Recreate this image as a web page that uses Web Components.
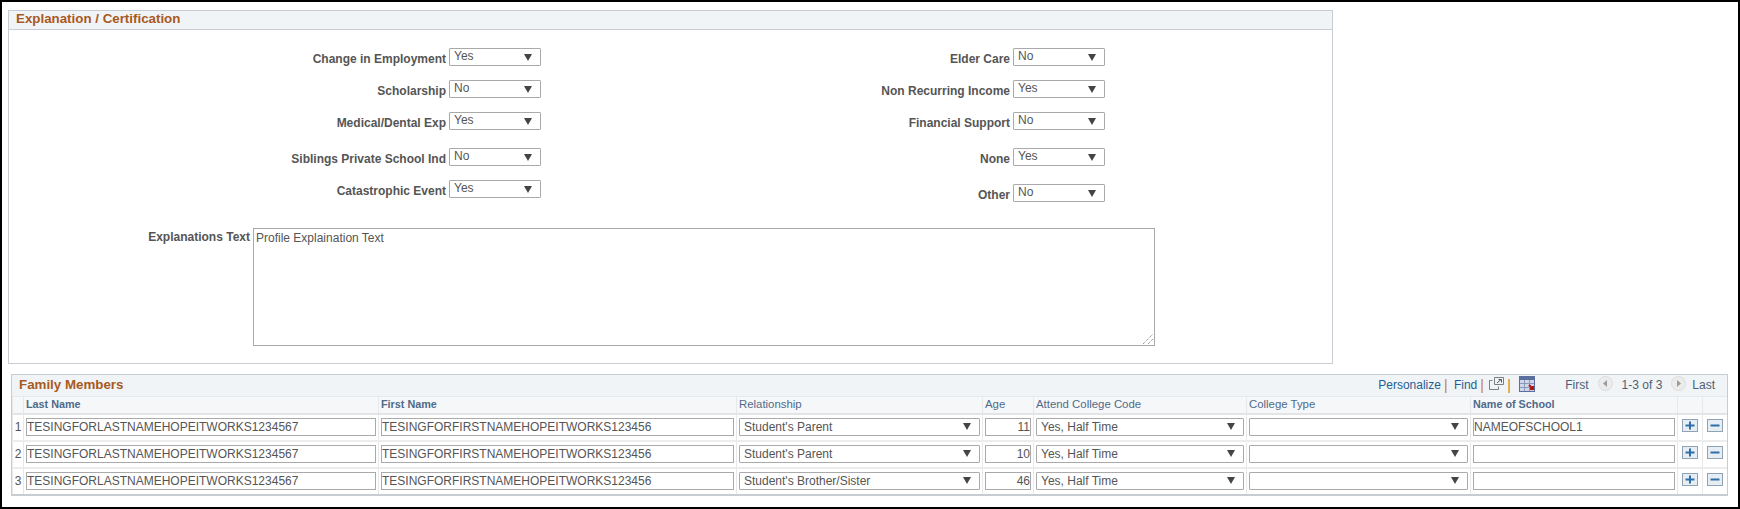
<!DOCTYPE html>
<html>
<head>
<meta charset="utf-8">
<style>
  html, body { margin: 0; background: #fff; }
  body { font: 12px "Liberation Sans", Arial, sans-serif; color: #555; }
  #page { box-sizing: border-box; width: 1740px; height: 509px; border: 2px solid #000; padding: 8px 10px 0 6px; }
</style>
</head>
<body>
<div id="page">
  <ps-section title="Explanation / Certification">
    <div slot="left">
      <ps-field label="Change in Employment" value="Yes" gap="14"></ps-field>
      <ps-field label="Scholarship" value="No" gap="14"></ps-field>
      <ps-field label="Medical/Dental Exp" value="Yes" gap="18"></ps-field>
      <ps-field label="Siblings Private School Ind" value="No" gap="14"></ps-field>
      <ps-field label="Catastrophic Event" value="Yes"></ps-field>
    </div>
    <div slot="right">
      <ps-field label="Elder Care" value="No" gap="14"></ps-field>
      <ps-field label="Non Recurring Income" value="Yes" gap="14"></ps-field>
      <ps-field label="Financial Support" value="No" gap="18"></ps-field>
      <ps-field label="None" value="Yes" gap="18"></ps-field>
      <ps-field label="Other" value="No"></ps-field>
    </div>
    <ps-textarea slot="text" label="Explanations Text">Profile Explaination Text</ps-textarea>
  </ps-section>
  <family-grid title="Family Members">
    <script type="application/json">
      [
        {"last":"TESINGFORLASTNAMEHOPEITWORKS1234567","first":"TESINGFORFIRSTNAMEHOPEITWORKS123456","rel":"Student's Parent","age":"11","code":"Yes, Half Time","type":"","school":"NAMEOFSCHOOL1"},
        {"last":"TESINGFORLASTNAMEHOPEITWORKS1234567","first":"TESINGFORFIRSTNAMEHOPEITWORKS123456","rel":"Student's Parent","age":"10","code":"Yes, Half Time","type":"","school":""},
        {"last":"TESINGFORLASTNAMEHOPEITWORKS1234567","first":"TESINGFORFIRSTNAMEHOPEITWORKS123456","rel":"Student's Brother/Sister","age":"46","code":"Yes, Half Time","type":"","school":""}
      ]
    </script>
  </family-grid>
</div>

<script>
class PsSelect extends HTMLElement {
  connectedCallback() {
    const value = this.getAttribute("value") || "";
    this.attachShadow({ mode: "open" }).innerHTML = `
      <style>
        :host {
          display: flex; box-sizing: border-box; height: 18px; align-items: center;
          justify-content: space-between; background: #fff; border: 1px solid #aaa;
          border-radius: 1px; padding: 0 8px 0 4px; color: #555;
          font: 12px/14px "Liberation Sans", Arial, sans-serif;
        }
        span { position: relative; top: var(--text-shift, 0); white-space: nowrap; }
        svg { flex: none; }
      </style>
      <span>${value}</span>
      <svg width="8" height="7" viewBox="0 0 8 7"><path d="M0 0h8L4 7z" fill="#444"/></svg>`;
  }
}
customElements.define("ps-select", PsSelect);

class PsField extends HTMLElement {
  connectedCallback() {
    const gap = this.getAttribute("gap") || 0;
    this.attachShadow({ mode: "open" }).innerHTML = `
      <style>
        :host { display: flex; justify-content: flex-end; align-items: flex-start; gap: 3px; margin-bottom: ${gap}px; }
        label { font: bold 12px/18px "Liberation Sans", Arial, sans-serif; color: #555; padding-top: 2px; height: 16px; white-space: nowrap; }
        ps-select { width: 92px; --text-shift: -1px; }
      </style>
      <label>${this.getAttribute("label")}</label>
      <ps-select value="${this.getAttribute("value")}"></ps-select>`;
  }
}
customElements.define("ps-field", PsField);

class PsTextarea extends HTMLElement {
  connectedCallback() {
    this.attachShadow({ mode: "open" }).innerHTML = `
      <style>
        :host { display: flex; gap: 3px; align-items: flex-start; }
        label { width: 241px; box-sizing: border-box; text-align: right; font: bold 12px/14px "Liberation Sans", Arial, sans-serif; color: #555; padding-top: 2px; white-space: nowrap; }
        .box { position: relative; box-sizing: border-box; width: 902px; height: 118px; border: 1px solid #aaa; padding: 2px; font: 12px/14px "Liberation Sans", Arial, sans-serif; color: #555; }
        svg { position: absolute; right: 1px; bottom: 1px; }
      </style>
      <label>${this.getAttribute("label")}</label>
      <div class="box"><slot></slot>
        <svg width="10" height="10" viewBox="0 0 10 10"><path d="M0 10 10 0M5 10l5-5" stroke="#777" stroke-dasharray="1 1" fill="none"/></svg>
      </div>`;
  }
}
customElements.define("ps-textarea", PsTextarea);

class PsSection extends HTMLElement {
  connectedCallback() {
    this.attachShadow({ mode: "open" }).innerHTML = `
      <style>
        :host { display: block; box-sizing: border-box; width: 1325px; height: 354px; border: 1px solid #c8ccd3; }
        h2 { margin: 0; box-sizing: border-box; height: 19px; padding: 0 7px; background: #f1f4f6; border-bottom: 1px solid #c8ccd3; font: bold 13.33px/16px "Liberation Sans", Arial, sans-serif; color: #a85a1e; }
        .cols { display: flex; padding-top: 18px; }
        .left { width: 532px; }
        .right { width: 564px; }
        .text { padding-top: 26px; }
      </style>
      <h2>${this.getAttribute("title")}</h2>
      <div class="cols">
        <div class="left"><slot name="left"></slot></div>
        <div class="right"><slot name="right"></slot></div>
      </div>
      <div class="text"><slot name="text"></slot></div>`;
  }
}
customElements.define("ps-section", PsSection);

class FamilyGrid extends HTMLElement {
  get data() {
    const script = this.querySelector('script[type="application/json"]');
    return script ? JSON.parse(script.textContent) : [];
  }
  connectedCallback() {
    const row = (it, i) => `
      <tr>
        <td class="n">${i + 1}</td>
        <td><div class="in">${it.last}</div></td>
        <td><div class="in">${it.first}</div></td>
        <td><ps-select value="${it.rel}"></ps-select></td>
        <td><div class="in age">${it.age}</div></td>
        <td><ps-select value="${it.code}"></ps-select></td>
        <td><ps-select value="${it.type}"></ps-select></td>
        <td><div class="in">${it.school}</div></td>
        <td class="btn"><svg width="16" height="13" viewBox="0 0 16 13"><rect x=".5" y=".5" width="15" height="12" fill="#e6eef4" stroke="#8fa3b5"/><path d="M3.5 6.5h9M8 2.5v8" stroke="#2f6ea8" stroke-width="2"/></svg></td>
        <td class="btn"><svg width="16" height="13" viewBox="0 0 16 13"><rect x=".5" y=".5" width="15" height="12" fill="#e6eef4" stroke="#8fa3b5"/><path d="M3.5 6.5h9" stroke="#2f6ea8" stroke-width="2"/></svg></td>
      </tr>`;
    this.attachShadow({ mode: "open" }).innerHTML = `
      <style>
        :host { display: block; box-sizing: border-box; width: 1717px; margin: 10px 0 0 3px; border: 1px solid #c8ccd3; border-bottom: 0; font: 12px "Liberation Sans", Arial, sans-serif; color: #555; }
        .bar { display: flex; align-items: center; box-sizing: border-box; height: 21px; padding: 0 12px 2px 7px; background: #f1f4f6; }
        .bar b { font: bold 13.33px "Liberation Sans", Arial, sans-serif; color: #a85a1e; margin-right: auto; }
        .bar a { color: #1f5f93; }
        .bar i { font-style: normal; font-size: 14px; width: 3px; margin-left: 3px; }
        .o { color: #c9802f; }
        .pager { color: #4d5f75; }
        .bar svg { flex: none; margin-top: -2px; }
        table { border-collapse: collapse; table-layout: fixed; width: 1715px; }
        th { height: 17px; padding: 0 0 2px 2px; background: #f6f7f8; border-left: 1px solid #e6e8ea; border-top: 1px solid #e6e8ea; border-bottom: 2px solid #e2e4e6; text-align: left; font: 11.4px "Liberation Sans", Arial, sans-serif; color: #4f6a8a; box-sizing: border-box; white-space: nowrap; }
        th.b { font: bold 10.8px "Liberation Sans", Arial, sans-serif; }
        td { height: 27px; box-sizing: border-box; padding: 3px 2px 0; border-left: 1px solid #e6e8ea; border-bottom: 2px solid #ececec; vertical-align: top; }
        tr:last-child td { border-bottom-color: #c8ccd3; }
        td.n { text-align: center; padding: 3px 0 0; line-height: 18px; color: #555; }
        td.btn { text-align: center; padding: 4px 0 0; }
        td.btn svg { display: block; margin: 0 auto; }
        .in { box-sizing: border-box; height: 18px; border: 1px solid #aaa; background: #fff; padding: 0; font: 12px/16px "Liberation Sans", Arial, sans-serif; color: #555; white-space: nowrap; overflow: hidden; }
        .age { text-align: right; }
      </style>
      <div class="bar">
        <b>${this.getAttribute("title")}</b>
        <a>Personalize</a><i class="o" style="margin-right:7px">|</i>
        <a>Find</a><i class="o" style="margin-right:6px">|</i>
        <svg width="15" height="13" viewBox="0 0 15 13"><path d="M5.5 .5h9v7h-9zM3.5 3.5h-3v9h9v-3" fill="none" stroke="#7d7d7d"/><path d="M8 6l4-3.500M9.500 2.500h3v3" fill="none" stroke="#555"/></svg>
        <i class="o" style="margin-right:9px">|</i>
        <svg width="16" height="16" viewBox="0 0 16 16"><rect x=".5" y=".5" width="15" height="15" fill="#cfd6e6" stroke="#5a6f9e"/><rect x="1" y="1" width="14" height="3" fill="#5a6f9e"/><path d="M5.500 4v11M10.500 4v11M1 7.500h14M1 11.500h14" stroke="#8a99bb"/><path d="M10 9l4 4M14 10v3h-3" fill="none" stroke="#b01818" stroke-width="2"/></svg>
        <span class="pager" style="margin-left:30px">First</span>
        <svg style="margin:-2px 9px 0 9px" width="15" height="15" viewBox="0 0 15 15"><circle cx="7.500" cy="7.500" r="7" fill="#ececec" stroke="#dcdcdc"/><path d="M9 4v7L5 7.500z" fill="#9c9c9c"/></svg>
        <span class="pager">1-3 of 3</span>
        <svg style="margin:-2px 6px 0 9px" width="15" height="15" viewBox="0 0 15 15"><circle cx="7.500" cy="7.500" r="7" fill="#ececec" stroke="#dcdcdc"/><path d="M6 4v7l4-3.500z" fill="#9c9c9c"/></svg>
        <span class="pager">Last</span>
      </div>
      <table>
        <colgroup><col style="width:11px"><col style="width:355px"><col style="width:358px"><col style="width:246px"><col style="width:51px"><col style="width:213px"><col style="width:224px"><col style="width:207px"><col style="width:25px"><col></colgroup>
        <tr><th></th><th class="b">Last Name</th><th class="b">First Name</th><th>Relationship</th><th>Age</th><th>Attend College Code</th><th>College Type</th><th class="b">Name of School</th><th></th><th></th></tr>
        ${this.data.map(row).join("")}
      </table>`;
  }
}
customElements.define("family-grid", FamilyGrid);
</script>
</body>
</html>
